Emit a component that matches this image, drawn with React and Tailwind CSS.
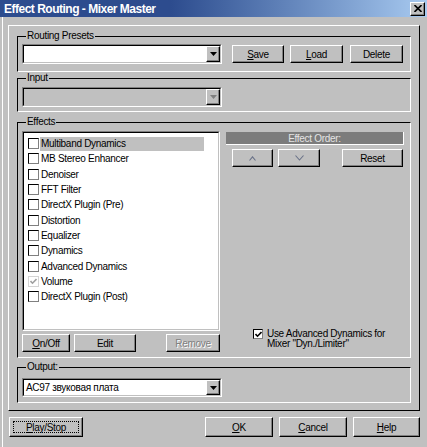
import React from 'react';

const raised = 'border border-t-white border-l-white border-r-black border-b-black shadow-[inset_-1px_-1px_0_#808080]';

const Arrow = ({ disabled }) => (
  <svg width="7" height="4" viewBox="0 0 7 4">
    <path d="M0 0 H7 L3.5 4 Z" fill={disabled ? '#808080' : '#000'} />
  </svg>
);

const Btn = ({ children, className = '', disabled }) => (
  <div
    className={`flex items-center justify-center ${raised} ${disabled ? 'text-[#808080] [text-shadow:1px_1px_0_#fff]' : 'text-black'} ${className}`}
  >
    {children}
  </div>
);

const Combo = ({ value, disabled, className = '' }) => (
  <div className={`flex border border-t-[#808080] border-l-[#808080] border-r-white border-b-white ${className}`}>
    <div
      className={`flex flex-1 border border-t-black border-l-black border-r-[#c0c0c0] border-b-[#c0c0c0] ${
        disabled ? 'bg-[#c0c0c0]' : 'bg-white'
      }`}
    >
      <span className="flex-1 flex items-center pl-[2px] whitespace-nowrap overflow-hidden">{value}</span>
      <span className={`w-[14px] flex items-center justify-center bg-[#c0c0c0] ${raised}`}>
        <Arrow disabled={disabled} />
      </span>
    </div>
  </div>
);

const Group = ({ label, className = '', children }) => (
  <div className={`relative border border-t-black border-l-black border-r-white border-b-white ${className}`}>
    <span className="absolute left-[8px] top-[-7px] bg-[#c0c0c0] px-[1px] leading-[12px]">{label}</span>
    {children}
  </div>
);

const Check = ({ checked, disabled, size = 'w-[11px] h-[11px]' }) => (
  <span
    className={`${size} shrink-0 flex items-center justify-center border ${
      disabled
        ? 'border-[#d4d4d4] bg-white'
        : 'border-t-black border-l-black border-r-[#808080] border-b-[#808080] bg-white'
    }`}
  >
    {checked && (
      <svg width="7" height="7" viewBox="0 0 7 7">
        <path d="M0.5 3 L2.5 5.2 L6.5 1" fill="none" stroke={disabled ? '#a0a0a0' : '#000'} strokeWidth="1.6" />
      </svg>
    )}
  </span>
);

const u = (ch) => <span className="underline underline-offset-1">{ch}</span>;

const effects = [
  { name: 'Multiband Dynamics', selected: true },
  { name: 'MB Stereo Enhancer' },
  { name: 'Denoiser' },
  { name: 'FFT Filter' },
  { name: 'DirectX Plugin (Pre)' },
  { name: 'Distortion' },
  { name: 'Equalizer' },
  { name: 'Dynamics' },
  { name: 'Advanced Dynamics' },
  { name: 'Volume', checked: true, disabled: true },
  { name: 'DirectX Plugin (Post)' },
];

export default function App() {
  return (
    <div className="w-[427px] h-[447px] overflow-hidden bg-[#c0c0c0] flex flex-col font-['Liberation_Sans',Arial,sans-serif] text-[10px] tracking-[-0.3px] text-black">
      {/* title bar */}
      <div className="h-[17px] shrink-0 flex items-center bg-linear-to-r from-[#2d4c8e] from-40% to-[#a8caf0] pl-[4px] pr-[2px]">
        <span className="flex-1 text-white font-bold text-[12px] tracking-[-0.5px] leading-none">
          Effect Routing - Mixer Master
        </span>
        <span className={`w-[15px] h-[14px] bg-[#c0c0c0] flex items-center justify-center ${raised}`}>
          <svg width="8" height="7" viewBox="0 0 8 7">
            <path d="M0.5 0 L7.5 7 M7.5 0 L0.5 7" stroke="#000" strokeWidth="1.6" />
          </svg>
        </span>
      </div>

      <div className="flex-1 ml-[2px] border-l border-white pl-[5px] pt-[8px]">
        {/* main panel */}
        <div className="w-[412px] border border-t-white border-l-white border-r-black border-b-black pt-[10px] px-[8px] pb-[7px]">
          <Group label="Routing Presets" className="h-[36px]">
            <div className="flex items-start pt-[7px] pl-[4px]">
              <Combo className="w-[200px] h-[20px]" value="" />
              <Btn className="ml-[10px] mt-[1px] w-[52px] h-[18px]">{u('S')}ave</Btn>
              <Btn className="ml-[6px] mt-[1px] w-[53px] h-[18px]">{u('L')}oad</Btn>
              <Btn className="ml-[7px] mt-[1px] w-[53px] h-[18px]">Delete</Btn>
            </div>
          </Group>

          <Group label="Input" className="mt-[6px] h-[34px]">
            <div className="pt-[8px] pl-[4px]">
              <Combo className="w-[200px] h-[20px]" value="" disabled />
            </div>
          </Group>

          <Group label="Effects" className="mt-[10px] h-[236px]">
            <div className="flex pt-[8px] pl-[4px]">
              <div className="w-[198px] flex flex-col">
                <div className="h-[200px] border border-t-[#808080] border-l-[#808080] border-r-white border-b-white">
                  <div className="h-full border border-t-black border-l-black border-r-[#c0c0c0] border-b-[#c0c0c0] bg-white pt-[3px] pl-[4px]">
                    {effects.map((e) => (
                      <div key={e.name} className="h-[15.3px] flex items-center">
                        <Check checked={e.checked} disabled={e.disabled} />
                        <span
                          className={`ml-[1px] w-[164px] h-[14px] flex items-center pl-[1px] whitespace-nowrap ${
                            e.selected ? 'bg-[#c0c0c0]' : ''
                          }`}
                        >
                          {e.name}
                        </span>
                      </div>
                    ))}
                  </div>
                </div>
                <div className="flex mt-[3px]">
                  <Btn className="w-[48px] h-[18px]">{u('O')}n/Off</Btn>
                  <Btn className="ml-[4px] w-[62px] h-[18px]">Edit</Btn>
                  <Btn className="ml-[30px] w-[54px] h-[18px]" disabled>
                    Remove
                  </Btn>
                </div>
              </div>

              <div className="ml-[6px] w-[178px] flex flex-col">
                <div className="mt-[1px] h-[13px] bg-[#7c7c7c] border-r border-b border-white flex items-center justify-center text-[#e4e4e4]">
                  Effect Order:
                </div>
                <div className="flex mt-[4px]">
                  <Btn className="ml-[6px] w-[41px] h-[18px]">
                    <svg width="7" height="5" viewBox="0 0 7 5">
                      <path d="M0.5 4.5 L3.5 0.8 L6.5 4.5" fill="none" stroke="#6a7288" strokeWidth="1.1" />
                    </svg>
                  </Btn>
                  <Btn className="ml-[5px] w-[42px] h-[18px]">
                    <svg width="9" height="6" viewBox="0 0 9 6">
                      <path d="M0.5 0.5 L4.5 5 L8.5 0.5" fill="none" stroke="#6a7288" strokeWidth="1.1" />
                    </svg>
                  </Btn>
                  <Btn className="ml-[22px] w-[61px] h-[18px]">Reset</Btn>
                </div>
                <div className="flex-1" />
                <div className="flex items-start ml-[27px] mb-[3px]">
                  <Check checked size="w-[10px] h-[10px]" />
                  <span className="ml-[4px] leading-[10px]">
                    Use Advanced Dynamics for
                    <br />
                    Mixer "Dyn./Limiter"
                  </span>
                </div>
              </div>
            </div>
          </Group>

          <Group label="Output:" className="mt-[9px] h-[36px]">
            <div className="pt-[10px] pl-[4px]">
              <Combo className="w-[200px] h-[19px]" value="AC97 звуковая плата" />
            </div>
          </Group>
        </div>

        {/* bottom buttons */}
        <div className="w-[412px] flex mt-[6px]">
          <Btn className="ml-[1px] w-[74px] h-[20px] p-[3px]">
            <span className="w-full h-full flex items-center justify-center border border-dotted border-black">
              {u('P')}lay/Stop
            </span>
          </Btn>
          <div className="ml-auto flex">
            <Btn className="w-[68px] h-[20px]">{u('O')}K</Btn>
            <Btn className="ml-[6px] w-[68px] h-[20px]">{u('C')}ancel</Btn>
            <Btn className="ml-[6px] w-[67px] h-[20px]">{u('H')}elp</Btn>
          </div>
        </div>
      </div>
    </div>
  );
}
